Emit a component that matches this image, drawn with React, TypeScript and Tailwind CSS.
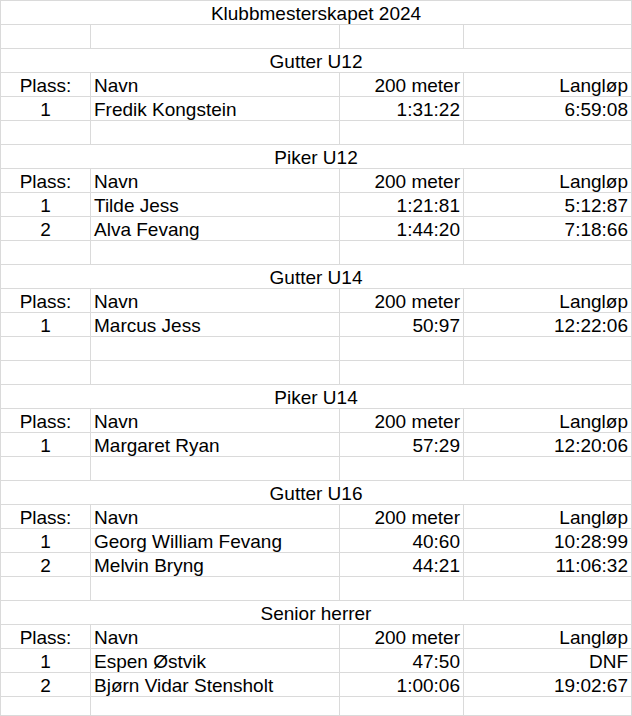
import React from 'react';

type Row =
  | { kind: 'title'; text: string }
  | { kind: 'blank'; short?: boolean }
  | { kind: 'header' }
  | { kind: 'entry'; place: string; name: string; sprint: string; long: string };

const rows: Row[] = [
  { kind: 'title', text: 'Klubbmesterskapet 2024' },
  { kind: 'blank' },
  { kind: 'title', text: 'Gutter U12' },
  { kind: 'header' },
  { kind: 'entry', place: '1', name: 'Fredik Kongstein', sprint: '1:31:22', long: '6:59:08' },
  { kind: 'blank' },
  { kind: 'title', text: 'Piker U12' },
  { kind: 'header' },
  { kind: 'entry', place: '1', name: 'Tilde Jess', sprint: '1:21:81', long: '5:12:87' },
  { kind: 'entry', place: '2', name: 'Alva Fevang', sprint: '1:44:20', long: '7:18:66' },
  { kind: 'blank' },
  { kind: 'title', text: 'Gutter U14' },
  { kind: 'header' },
  { kind: 'entry', place: '1', name: 'Marcus Jess', sprint: '50:97', long: '12:22:06' },
  { kind: 'blank' },
  { kind: 'blank' },
  { kind: 'title', text: 'Piker U14' },
  { kind: 'header' },
  { kind: 'entry', place: '1', name: 'Margaret Ryan', sprint: '57:29', long: '12:20:06' },
  { kind: 'blank' },
  { kind: 'title', text: 'Gutter U16' },
  { kind: 'header' },
  { kind: 'entry', place: '1', name: 'Georg William Fevang', sprint: '40:60', long: '10:28:99' },
  { kind: 'entry', place: '2', name: 'Melvin Bryng', sprint: '44:21', long: '11:06:32' },
  { kind: 'blank' },
  { kind: 'title', text: 'Senior herrer' },
  { kind: 'header' },
  { kind: 'entry', place: '1', name: 'Espen Østvik', sprint: '47:50', long: 'DNF' },
  { kind: 'entry', place: '2', name: 'Bjørn Vidar Stensholt', sprint: '1:00:06', long: '19:02:67' },
  { kind: 'blank', short: true },
];

const cell = 'bg-white h-[23px] flex items-center leading-[21px] pt-[2px] whitespace-nowrap overflow-hidden';

const Cells: React.FC<{ row: Row }> = ({ row }) => {
  if (row.kind === 'title') {
    return <div className={`${cell} col-span-4 justify-center`}>{row.text}</div>;
  }
  if (row.kind === 'blank') {
    const h = row.short ? 'h-[18px]' : 'h-[23px]';
    return (
      <>
        <div className={`bg-white ${h}`} />
        <div className={`bg-white ${h}`} />
        <div className={`bg-white ${h}`} />
        <div className={`bg-white ${h}`} />
      </>
    );
  }
  const place = row.kind === 'header' ? 'Plass:' : row.place;
  const name = row.kind === 'header' ? 'Navn' : row.name;
  const sprint = row.kind === 'header' ? '200 meter' : row.sprint;
  const long = row.kind === 'header' ? 'Langløp' : row.long;
  return (
    <>
      <div className={`${cell} justify-center`}>{place}</div>
      <div className={`${cell} pl-[3px]`}>{name}</div>
      <div className={`${cell} justify-end pr-[3px]`}>{sprint}</div>
      <div className={`${cell} justify-end pr-[3px]`}>{long}</div>
    </>
  );
};

export default function App() {
  return (
    <div className="w-[632px] h-[716px] bg-white overflow-hidden">
      <div
        className="grid grid-cols-[89px_248px_123px_167px] gap-px p-px bg-[#dadada] text-black text-[19px]"
        style={{ fontFamily: '"Liberation Sans", Arial, sans-serif' }}
      >
        {rows.map((row, i) => (
          <Cells key={i} row={row} />
        ))}
      </div>
    </div>
  );
}
